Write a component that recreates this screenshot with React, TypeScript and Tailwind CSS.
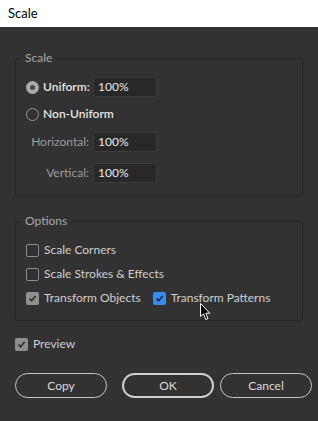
import type { ReactNode } from "react";

const font = { fontFamily: 'Lato, "Noto Sans", sans-serif' };

function Check({ state, label }: { state: "off" | "gray" | "blue"; label: string }) {
  return (
    <div className="flex h-[20px] items-center">
      {state === "off" ? (
        <span className="h-[13px] w-[13px] shrink-0 rounded-[2px] border border-[#8c8c8c]" />
      ) : (
        <span
          className={`flex h-[13px] w-[13px] shrink-0 items-center justify-center rounded-[2px] ${
            state === "blue" ? "bg-[#378ef0]" : "bg-[#8e8e8e]"
          }`}
        >
          <svg width="9" height="9" viewBox="0 0 9 9">
            <path d="M1.5 4.6 L3.6 6.7 L7.6 2" fill="none" stroke={state === "blue" ? "#1b2a40" : "#2f2f2f"} strokeWidth="1.7" />
          </svg>
        </span>
      )}
      <span className="ml-[5px] whitespace-nowrap text-[12px] text-[#cfcfcf]">{label}</span>
    </div>
  );
}

function Radio({ on, label }: { on: boolean; label: string }) {
  return (
    <div className="flex items-center">
      {on ? (
        <span className="flex h-[13px] w-[13px] shrink-0 items-center justify-center rounded-full bg-[#a9a9a9]">
          <span className="h-[5px] w-[5px] rounded-full bg-[#4a4a4a]" />
        </span>
      ) : (
        <span className="h-[13px] w-[13px] shrink-0 rounded-full border border-[#9a9a9a]" />
      )}
      <span className="ml-[4px] whitespace-nowrap text-[12px] font-semibold text-[#e6e6e6]">{label}</span>
    </div>
  );
}

function Field({ children }: { children: ReactNode }) {
  return (
    <div className="ml-[4px] flex h-[20px] w-[64px] items-center rounded-[3px] border border-[#3c3c3c] bg-[#282828] px-[4px] text-[12px] text-[#e8e8e8]">
      {children}
    </div>
  );
}

function Group({ title, children }: { title: string; children: ReactNode }) {
  return (
    <fieldset className="rounded-[3px] border border-[#272727] pl-[5px]">
      <legend className="h-[18px] px-[4px] text-[12px] leading-[18px] text-[#a8a8a8]">{title}</legend>
      <div className="pl-[5px]">{children}</div>
    </fieldset>
  );
}

function Button({ label, main }: { label: string; main?: boolean }) {
  return (
    <button
      className={`flex h-[25px] w-[92px] shrink-0 items-center justify-center rounded-full text-[12px] text-[#dcdcdc] ${
        main ? "border-2 border-[#cfcfcf]" : "border-[1.5px] border-[#c4c4c4]"
      }`}
    >
      {label}
    </button>
  );
}

export default function App() {
  return (
    <div className="relative h-[421px] w-[318px] overflow-hidden bg-[#323232]" style={font}>
      <div className="flex h-[27px] items-center bg-white pl-[8px] text-[13px] text-black">Scale</div>

      <div className="px-[15px] pt-[22px]">
        <Group title="Scale">
          <div className="mt-[10px] flex items-center">
            <div className="w-[63px]">
              <Radio on label="Uniform:" />
            </div>
            <Field>100%</Field>
          </div>
          <div className="mt-[7px] flex h-[20px] items-center">
            <Radio on={false} label="Non-Uniform" />
          </div>
          <div className="mt-[8px] flex items-center">
            <span className="w-[63px] text-right text-[12px] text-[#9c9c9c]">Horizontal:</span>
            <Field>100%</Field>
          </div>
          <div className="mt-[11px] mb-[13px] flex items-center">
            <span className="w-[63px] text-right text-[12px] text-[#9c9c9c]">Vertical:</span>
            <Field>100%</Field>
          </div>
        </Group>

        <div className="mt-[15px]">
          <Group title="Options">
            <div className="mt-[10px] flex flex-col gap-[4px] pb-[12px]">
              <Check state="off" label="Scale Corners" />
              <Check state="off" label="Scale Strokes & Effects" />
              <div className="flex gap-[12px]">
                <Check state="gray" label="Transform Objects" />
                <Check state="blue" label="Transform Patterns" />
              </div>
            </div>
          </Group>
        </div>

        <div className="mt-[13px]">
          <Check state="gray" label="Preview" />
        </div>

        <div className="mt-[19px] flex">
          <Button label="Copy" />
          <div className="ml-[15px] shrink-0">
            <Button label="OK" main />
          </div>
          <div className="ml-[6px] shrink-0">
            <Button label="Cancel" />
          </div>
        </div>
      </div>

      <svg className="absolute left-[200px] top-[303px]" width="12" height="18" viewBox="0 0 12 18">
        <path d="M0.5 0.5 L0.5 13.5 L3.5 10.8 L5.8 16.5 L8 15.6 L5.8 10.2 L9.8 10.2 Z" fill="#000" stroke="#fff" strokeWidth="1" />
      </svg>
    </div>
  );
}
